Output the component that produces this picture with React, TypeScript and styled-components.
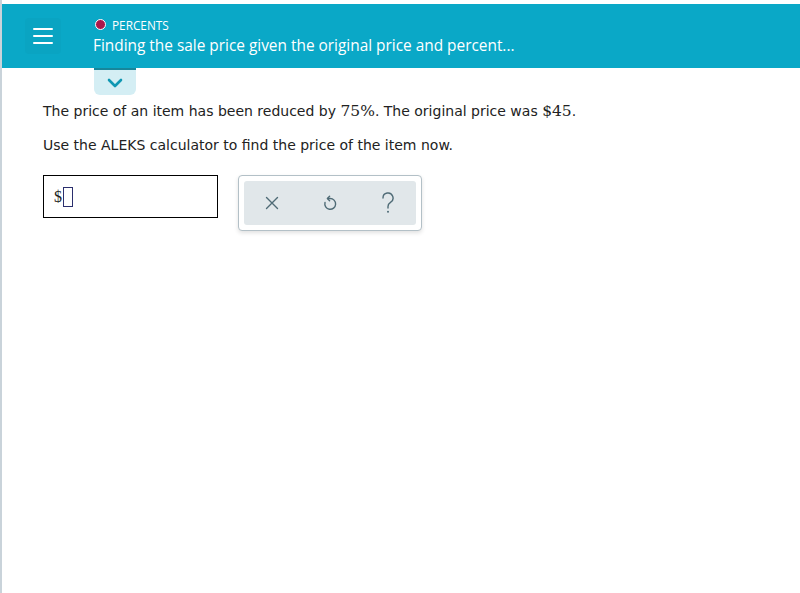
import React from "react";
import styled, { createGlobalStyle } from "styled-components";

const GlobalStyle = createGlobalStyle`
  html, body {
    margin: 0;
    padding: 0;
    background: #ffffff;
  }
  body {
    font-family: "DejaVu Sans", Verdana, sans-serif;
  }
`;

const Page = styled.div`
  box-sizing: border-box;
  height: 593px;
  padding-top: 4px;
  border-left: 2px solid #c9d3da;
`;

const Header = styled.header`
  height: 64px;
  background: #0aa8c7;
  display: flex;
  align-items: center;
  position: relative;
`;

const MenuButton = styled.button`
  box-sizing: border-box;
  flex: 0 0 36px;
  width: 36px;
  height: 36px;
  margin-left: 23px;
  margin-right: 32px;
  border: none;
  border-radius: 4px;
  background: #0aa4c2;
  display: flex;
  flex-direction: column;
  justify-content: center;
  align-items: center;
  gap: 5px;
  padding: 0;
  span {
    display: block;
    flex: 0 0 2px;
    width: 20px;
    height: 2px;
    background: #ffffff;
    border-radius: 1px;
  }
`;

const Titles = styled.div`
  display: flex;
  flex-direction: column;
  gap: 4px;
  color: #ffffff;
  font-family: "Open Sans", "Lato", sans-serif;
`;

const Topic = styled.div`
  display: flex;
  align-items: center;
  gap: 6px;
  font-size: 11.8px;
  line-height: 14px;
`;

const Dot = styled.span`
  box-sizing: border-box;
  width: 11px;
  height: 11px;
  border-radius: 50%;
  background: #a8174a;
  border: 1.5px solid #ffffff;
  margin-left: 2px;
`;

const Title = styled.div`
  font-size: 15.4px;
  font-weight: 500;
  line-height: 19px;
`;

const Tab = styled.button`
  position: absolute;
  left: 92px;
  top: 64px;
  width: 42px;
  height: 27px;
  border: none;
  border-top: 2px solid #17869b;
  border-radius: 0 0 6px 6px;
  background: #d4eef4;
  display: flex;
  align-items: center;
  justify-content: center;
  padding: 0;
`;

const Content = styled.main`
  padding: 34px 0 0 41px;
  color: #222222;
`;

const Para = styled.p`
  margin: 0 0 16px 0;
  font-size: 14px;
  line-height: 18px;
`;

const MathNum = styled.span`
  font-family: "DejaVu Serif", "Liberation Serif", serif;
  font-size: 15.5px;
`;

const AnswerRow = styled.div`
  display: flex;
  align-items: flex-start;
  gap: 20px;
  margin-top: 21px;
`;

const AnswerBox = styled.div`
  box-sizing: border-box;
  width: 175px;
  height: 43px;
  border: 1px solid #000000;
  display: flex;
  align-items: center;
  padding-left: 10px;
  font-family: "Liberation Serif", serif;
  font-size: 16px;
  color: #222;
`;

const Cursor = styled.span`
  display: inline-block;
  box-sizing: border-box;
  width: 10px;
  height: 20px;
  border: 1px solid #2b2f6e;
  margin-left: 1px;
`;

const ToolPanel = styled.div`
  box-sizing: border-box;
  width: 184px;
  height: 56px;
  border: 1px solid #b3c0c7;
  border-radius: 4px;
  padding: 5px;
  background: #ffffff;
  box-shadow: 0 2px 4px rgba(0, 0, 0, 0.12);
`;

const ToolInner = styled.div`
  height: 100%;
  background: #e1e7ea;
  border-radius: 3px;
  display: flex;
  align-items: center;
  justify-content: space-between;
  padding: 0 14px;
`;

const ToolButton = styled.button`
  border: none;
  background: transparent;
  padding: 0;
  display: flex;
  align-items: center;
  justify-content: center;
  width: 28px;
  height: 28px;
  color: #4f6b76;
`;

export default function App() {
  return (
    <>
      <GlobalStyle />
      <Page>
        <Header>
          <MenuButton aria-label="menu">
            <span />
            <span />
            <span />
          </MenuButton>
          <Titles>
            <Topic>
              <Dot />
              PERCENTS
            </Topic>
            <Title>Finding the sale price given the original price and percent...</Title>
          </Titles>
          <Tab aria-label="expand">
            <svg width="16" height="10" viewBox="0 0 16 10">
              <path d="M2 2 L8 8 L14 2" fill="none" stroke="#0f97b3" strokeWidth="2.6" strokeLinecap="round" strokeLinejoin="round" />
            </svg>
          </Tab>
        </Header>
        <Content>
          <Para>
            The price of an item has been reduced by <MathNum>75%</MathNum>. The original price was <MathNum>$45</MathNum>.
          </Para>
          <Para>Use the ALEKS calculator to find the price of the item now.</Para>
          <AnswerRow>
            <AnswerBox>
              $<Cursor />
            </AnswerBox>
            <ToolPanel>
              <ToolInner>
                <ToolButton aria-label="clear">
                  <svg width="14" height="14" viewBox="0 0 14 14">
                    <path d="M1.5 1.5 L12.5 12.5 M12.5 1.5 L1.5 12.5" stroke="currentColor" strokeWidth="1.4" strokeLinecap="round" />
                  </svg>
                </ToolButton>
                <ToolButton aria-label="undo">
                  <svg width="16" height="18" viewBox="0 0 16 18">
                    <path d="M3 8.5 A5.4 5.4 0 1 0 8 4.5 L5.6 4.5" fill="none" stroke="currentColor" strokeWidth="1.4" strokeLinecap="round" strokeLinejoin="round" />
                    <path d="M7.6 2.3 L5.4 4.5 L7.6 6.7" fill="none" stroke="currentColor" strokeWidth="1.4" strokeLinecap="round" strokeLinejoin="round" />
                  </svg>
                </ToolButton>
                <ToolButton aria-label="help">
                  <svg width="14" height="22" viewBox="0 0 14 22">
                    <path d="M2 6 A5 5 0 1 1 9.5 10.3 C7.8 11.4 7 12.3 7 14.5 L7 16" fill="none" stroke="currentColor" strokeWidth="1.4" strokeLinecap="round" />
                    <circle cx="7" cy="19.8" r="1" fill="currentColor" />
                  </svg>
                </ToolButton>
              </ToolInner>
            </ToolPanel>
          </AnswerRow>
        </Content>
      </Page>
    </>
  );
}
